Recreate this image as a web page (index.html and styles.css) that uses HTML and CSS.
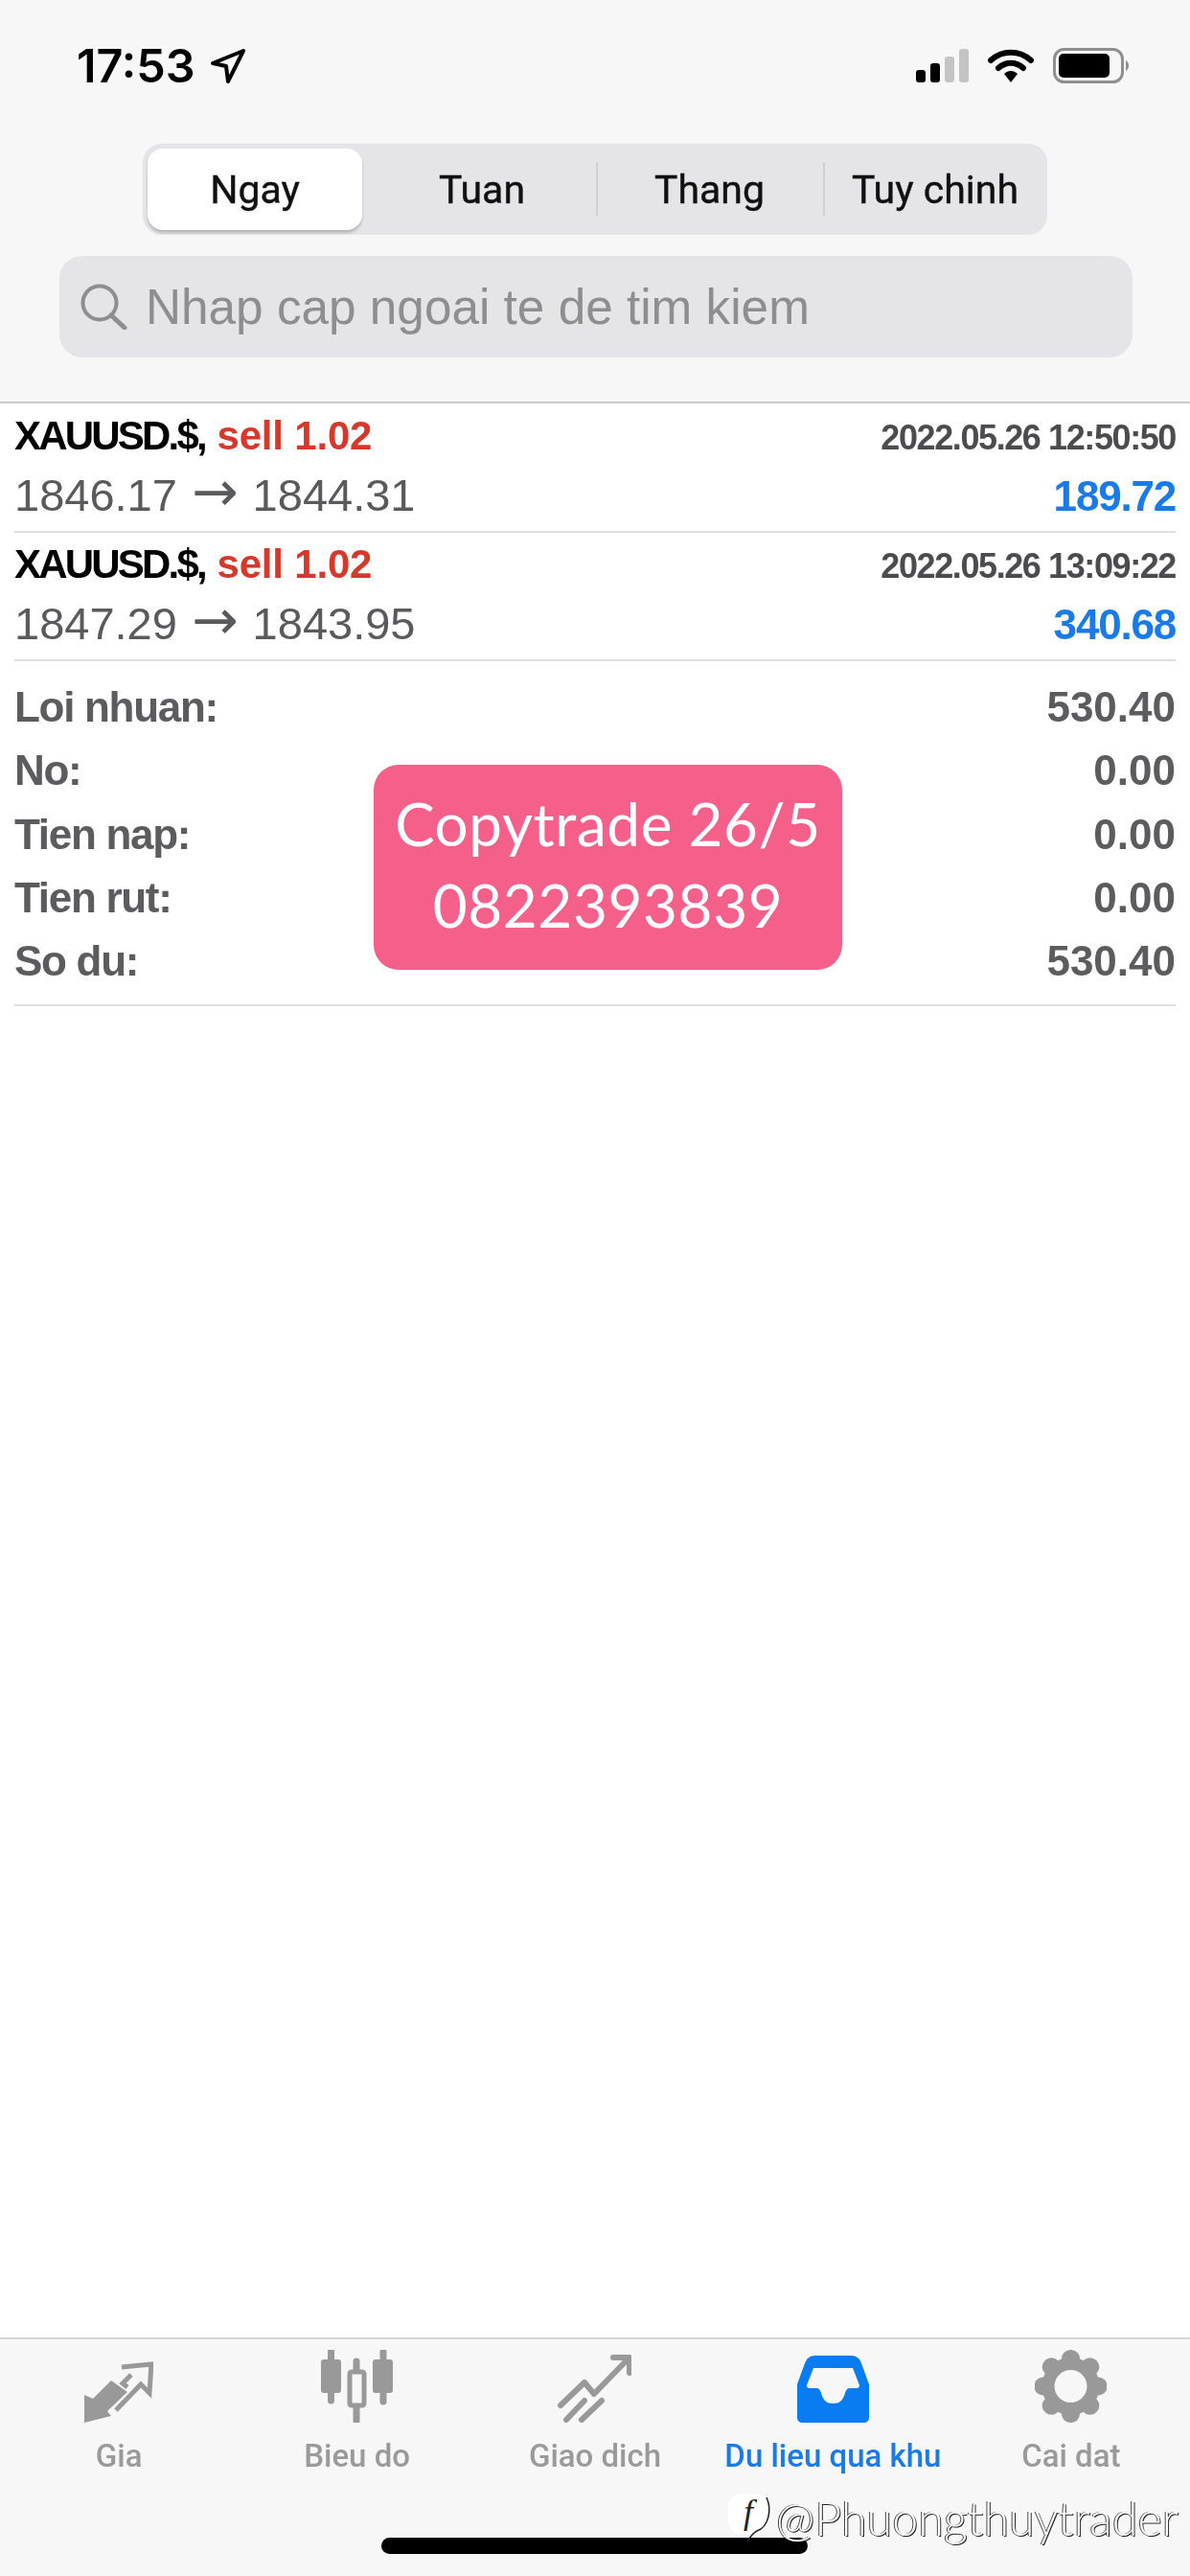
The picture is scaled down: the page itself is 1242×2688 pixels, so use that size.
FILE: index.html
```html
<!DOCTYPE html>
<html lang="en">

<head>
    <meta charset="UTF-8">
    <meta name="viewport" content="width=device-width, initial-scale=1.0">
    <title>Lich su</title>
    <link rel="stylesheet" href="styles.css">
</head>

<body>
    <div class="page">
        <!-- status bar + filter -->
        <header class="top">
            <div class="status">
                <div class="status_left">
                    <span class="time">17:53</span>
                    <svg class="loc" width="38" height="38" viewBox="0 0 38 38">
                        <path d="M35 3 L3 16 L17 19 L19 35 Z" fill="none" stroke="#000" stroke-width="4" stroke-linejoin="round"/>
                    </svg>
                </div>
                <div class="status_right">
                    <svg width="55" height="35" viewBox="0 0 55 35">
                        <rect x="0" y="22" width="10" height="13" rx="3" fill="#000"/>
                        <rect x="15" y="15" width="10" height="20" rx="3" fill="#000"/>
                        <rect x="30" y="8" width="10" height="27" rx="3" fill="#c4c4c4"/>
                        <rect x="45" y="0" width="10" height="35" rx="3" fill="#c4c4c4"/>
                    </svg>
                    <svg width="48" height="36" viewBox="0 0 48 36">
                        <path d="M3 12 C15 1 33 1 45 12" fill="none" stroke="#000" stroke-width="6" stroke-linecap="round"/>
                        <path d="M11 20 C19 13 29 13 37 20" fill="none" stroke="#000" stroke-width="6" stroke-linecap="round"/>
                        <path d="M17 26 C21 22 27 22 31 26 L24 35 Z" fill="#000"/>
                    </svg>
                    <svg width="79" height="37" viewBox="0 0 79 37">
                        <rect x="1.500" y="1.500" width="71" height="34" rx="10" fill="none" stroke="#8f8f8f" stroke-width="3"/>
                        <rect x="6" y="6" width="53" height="25" rx="5" fill="#000"/>
                        <path d="M76 13 C78 14 79 16 79 18.500 C79 21 78 23 76 24 Z" fill="#8f8f8f"/>
                    </svg>
                </div>
            </div>
            <div class="seg">
                <div class="seg_item current">Ngay</div>
                <div class="seg_item">Tuan</div>
                <div class="seg_item line">Thang</div>
                <div class="seg_item line last">Tuy chinh</div>
            </div>
            <div class="search">
                <svg width="50" height="48" viewBox="0 0 50 48">
                    <circle cx="21" cy="20" r="17.500" fill="none" stroke="#8e8e92" stroke-width="4"/>
                    <path d="M33 33 L47 46" stroke="#8e8e92" stroke-width="5" stroke-linecap="round"/>
                </svg>
                <span>Nhap cap ngoai te de tim kiem</span>
            </div>
        </header>

        <main class="list">
            <div class="order">
                <div class="order_line">
                    <div class="sym"><span class="name">XAUUSD.$,</span> <span class="sell">sell 1.02</span></div>
                    <div class="date">2022.05.26 12:50:50</div>
                </div>
                <div class="order_line">
                    <div class="price">1846.17 <span class="arrow">→</span> 1844.31</div>
                    <div class="profit">189.72</div>
                </div>
            </div>
            <div class="order">
                <div class="order_line">
                    <div class="sym"><span class="name">XAUUSD.$,</span> <span class="sell">sell 1.02</span></div>
                    <div class="date">2022.05.26 13:09:22</div>
                </div>
                <div class="order_line">
                    <div class="price">1847.29 <span class="arrow">→</span> 1843.95</div>
                    <div class="profit">340.68</div>
                </div>
            </div>
            <div class="summary">
                <div class="sum_row"><span>Loi nhuan:</span><span>530.40</span></div>
                <div class="sum_row"><span>No:</span><span>0.00</span></div>
                <div class="sum_row"><span>Tien nap:</span><span>0.00</span></div>
                <div class="sum_row"><span>Tien rut:</span><span>0.00</span></div>
                <div class="sum_row"><span>So du:</span><span>530.40</span></div>
                <!-- sticker on top of the screenshot -->
                <div class="sticker">Copytrade 26/5<br>0822393839</div>
            </div>
        </main>

        <nav class="tabs">
            <div class="tab">
                <svg width="72" height="64" viewBox="0 0 72 64">
                    <path d="M0 35 L9 39 L28 20 L45 32 L24 52 L28 57 L0 64 Z" fill="#999"/>
                    <path d="M39 6 L70 3 L68 33 L59 24 L33 51 M49 14 L40 23 L45 27" fill="none" stroke="#999" stroke-width="5"/>
                </svg>
                <span>Gia</span>
            </div>
            <div class="tab">
                <svg width="75" height="76" viewBox="0 0 75 76">
                    <path d="M10.500 2 V53 M37 12 V74 M65 2 V54" stroke="#999" stroke-width="7" stroke-linecap="round"/>
                    <rect x="0" y="10" width="21" height="35" rx="3" fill="#999"/>
                    <rect x="54" y="10" width="21" height="35" rx="3" fill="#999"/>
                    <rect x="30" y="23" width="15" height="35" rx="2" fill="#f7f7f7" stroke="#999" stroke-width="5"/>
                </svg>
                <span>Bieu do</span>
            </div>
            <div class="tab">
                <svg width="77" height="71" viewBox="0 0 77 71">
                    <path d="M3 53 L28 29 L38 41 L73 5 M58 3 H75 V19 M9 68 L28 48 M25 68 L46 48" fill="none" stroke="#999" stroke-width="6" stroke-linecap="round" stroke-linejoin="round"/>
                </svg>
                <span>Giao dich</span>
            </div>
            <div class="tab active">
                <svg width="75" height="70" viewBox="0 0 75 70">
                    <path d="M19 0 H56 C62 0 65 3 67 8 L75 30 V64 C75 68 73 70 69 70 H6 C2 70 0 68 0 64 V30 L8 8 C10 3 13 0 19 0 Z" fill="#0a7cf2"/>
                    <path d="M17 13 H58 L65 31 C65 33 64 34 62 34 H55 C52 34 51 36 50 39 C48 47 44 50 37.500 50 C31 50 27 47 25 39 C24 36 23 34 20 34 H13 C11 34 10 33 10 31 Z" fill="#f7f7f7"/>
                </svg>
                <span>Du lieu qua khu</span>
            </div>
            <div class="tab">
                <svg width="75" height="76" viewBox="0 0 75 76">
                    <g fill="#999">
                        <circle cx="37.500" cy="38" r="30"/>
                        <rect x="28" y="0" width="19" height="76" rx="9"/>
                        <rect x="28" y="0" width="19" height="76" rx="9" transform="rotate(45 37.500 38)"/>
                        <rect x="28" y="0" width="19" height="76" rx="9" transform="rotate(90 37.500 38)"/>
                        <rect x="28" y="0" width="19" height="76" rx="9" transform="rotate(135 37.500 38)"/>
                    </g>
                    <circle cx="37.500" cy="38" r="17" fill="#f7f7f7"/>
                </svg>
                <span>Cai dat</span>
            </div>
            <div class="home_bar"></div>
            <!-- watermark -->
            <div class="mark">
                <svg class="mark_logo" width="46" height="52" viewBox="0 0 46 52">
                    <rect x="0" y="1" width="41" height="42" rx="14" fill="#fff"/>
                    <path d="M40 5 C46 18 42 36 30 40 C26 42 23 46 20 51" fill="#fff" stroke="#222" stroke-width="1.500"/>
                    <text x="21" y="32" class="mark_f">f</text>
                </svg>
                <span>@Phuongthuytrader</span>
            </div>
        </nav>
    </div>
</body>

</html>
```

FILE: styles.css
```css
* {
    margin: 0;
    padding: 0;
    box-sizing: border-box;
}

body {
    font-family: "Liberation Sans", Arial, sans-serif;
    background-color: #fff;
}

.page {
    display: flex;
    flex-direction: column;
    width: 1242px;
    height: 2688px;
}

/* the source is a soft, upscaled capture */
.top,
.list,
.tab,
.home_bar {
    filter: blur(.7px);
}

/* top */

.top {
    height: 421px;
    padding: 0 60px;
    background-color: #f7f7f7;
    border-bottom: 2px solid #c9c9c9;
}

.status {
    display: flex;
    justify-content: space-between;
    align-items: center;
    height: 137px;
    margin: 0 4px 0 20px;
}

.status_left,
.status_right {
    display: flex;
    align-items: center;
}

.status_left {
    gap: 15px;
}

.status_right {
    gap: 20px;
}

.time {
    font-family: Inter, sans-serif;
    font-size: 48.500px;
    font-weight: 600;
    color: #000;
}

.seg {
    display: grid;
    grid-template-columns: 230px 238px 237px 229px;
    align-items: center;
    width: 944px;
    height: 95px;
    margin: 13px 0 0 89px;
    padding: 5px;
    border-radius: 20px;
    background-color: #e5e5e7;
}

.seg_item {
    display: flex;
    align-items: center;
    justify-content: center;
    height: 85px;
    font-family: Roboto, sans-serif;
    font-size: 41px;
    color: #111;
    -webkit-text-stroke: .4px #111;
}

.seg_item.current {
    margin-right: 6px;
    border-radius: 16px;
    background-color: #fff;
    box-shadow: 0 3px 3px rgba(0, 0, 0, .2);
}

.seg_item.line {
    position: relative;
}

.seg_item.line::before {
    content: "";
    position: absolute;
    left: 0;
    top: 15px;
    bottom: 15px;
    width: 2px;
    background-color: #d0d0d2;
}

.seg_item.last {
    padding-left: 5px;
}

.search {
    display: flex;
    align-items: center;
    gap: 19px;
    width: 1120px;
    height: 106px;
    margin: 22px 0 0 2px;
    padding-left: 21px;
    border-radius: 24px;
    background-color: #e5e5e7;
    font-size: 51.300px;
    color: #8e8e92;
}

/* list */

.list {
    flex: 1;
    padding: 1px 15px 0;
}

.order {
    height: 134px;
    border-bottom: 2px solid #dedede;
}

.order_line {
    display: flex;
    justify-content: space-between;
    align-items: baseline;
    height: 66px;
}

.order_line + .order_line {
    margin-top: -4px;
    height: 70px;
}

.sym {
    padding-top: 9px;
    font-size: 42px;
    font-weight: bold;
    color: #000;
}

.name {
    letter-spacing: -2.8px;
}

.sell {
    margin-left: 1px;
    letter-spacing: -.2px;
    color: #d6392b;
}

.date {
    font-size: 36px;
    font-weight: bold;
    letter-spacing: -1.4px;
    color: #4c4c4e;
}

.price {
    font-size: 47px;
    word-spacing: 2px;
    color: #5a5a5c;
}

.arrow {
    font-family: "DejaVu Sans", sans-serif;
    font-size: 58px;
    font-weight: normal;
    line-height: 1;
}

.profit {
    font-size: 44px;
    font-weight: bold;
    letter-spacing: -1.2px;
    color: #1a7ae6;
}

.summary {
    position: relative;
    height: 360px;
    padding-top: 15px;
    border-bottom: 2px solid #dedede;
}

.sum_row {
    display: flex;
    justify-content: space-between;
    align-items: center;
    height: 66.300px;
    font-size: 44px;
    font-weight: bold;
    color: #5c5c5e;
}

.sum_row span:first-child {
    letter-spacing: -1.300px;
}

.sticker {
    position: absolute;
    left: 375px;
    top: 108px;
    width: 489px;
    height: 214px;
    border-radius: 26px;
    background-color: #f4608a;
    font-family: Lato, sans-serif;
    font-size: 62px;
    letter-spacing: .6px;
    line-height: 85px;
    text-align: center;
    padding-top: 19px;
    color: #fff;
}

/* bottom tabs */

.tabs {
    position: relative;
    display: grid;
    grid-template-columns: repeat(5, 1fr);
    align-items: start;
    height: 249px;
    background-color: #f7f7f7;
    border-top: 2px solid #d6d6d6;
}

.tab {
    display: flex;
    flex-direction: column;
    align-items: center;
    justify-content: flex-end;
    height: 141px;
    font-family: Roboto, sans-serif;
    font-size: 33px;
    font-weight: 500;
    color: #9a9a9a;
}

.tab svg {
    margin-bottom: 15px;
}

.tab.active {
    color: #1a7ae6;
}

.home_bar {
    position: absolute;
    left: 398px;
    top: 207px;
    width: 445px;
    height: 17px;
    border-radius: 9px;
    background-color: #000;
}

.mark {
    position: absolute;
    left: 760px;
    top: 157px;
    display: flex;
    align-items: center;
    gap: 4px;
    font-family: Lato, sans-serif;
    font-size: 48.500px;
    font-weight: 300;
    color: #fff;
    text-shadow: 1px 1px 0 #222, -1px 0 0 #444;
}

.mark_logo {
    overflow: visible;
}

.mark_f {
    font-family: "Liberation Serif", serif;
    font-style: italic;
    font-size: 36px;
    text-anchor: middle;
    fill: #222;
    text-shadow: none;
}
```
